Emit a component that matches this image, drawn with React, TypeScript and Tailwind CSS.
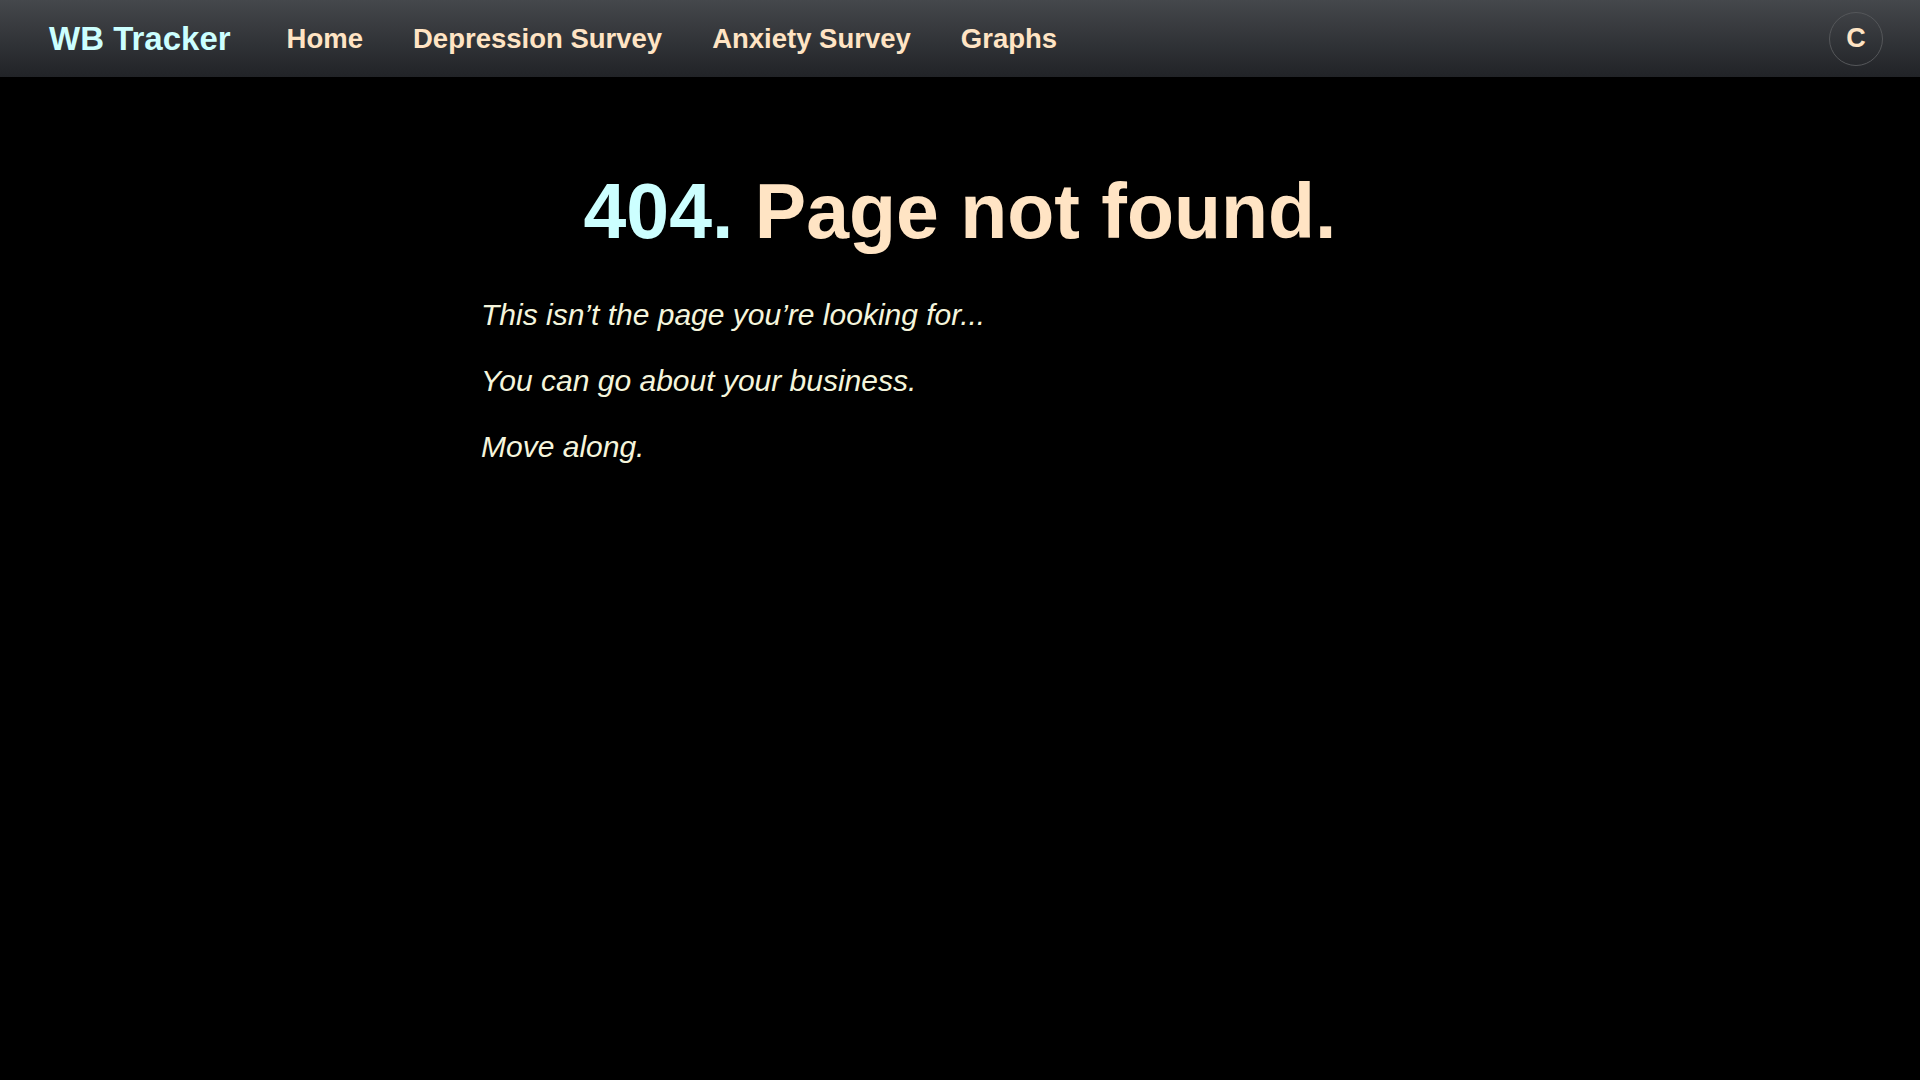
import { useState } from 'react'

const navLinks = ['Home', 'Depression Survey', 'Anxiety Survey', 'Graphs']

const lines = [
  'This isn’t the page you’re looking for...',
  'You can go about your business.',
  'Move along.',
]

export default function App() {
  const [active, setActive] = useState('')

  return (
    <div className="min-h-screen bg-black font-['Liberation_Sans',Arial,sans-serif]">
      <nav className="flex h-[77px] items-center bg-gradient-to-b from-[#45484c] to-[#212327] pl-[49px] pr-[37px]">
        <a href="#" className="mr-[56px] text-[33px] leading-none font-bold text-[#ccffff]">
          WB Tracker
        </a>
        <ul className="flex items-center gap-[50px] pt-[2px]">
          {navLinks.map((link) => (
            <li key={link}>
              <a
                href="#"
                onClick={() => setActive(link)}
                className={`text-[27.5px] leading-none font-bold ${active === link ? 'text-white' : 'text-[#ffe4c4]'}`}
              >
                {link}
              </a>
            </li>
          ))}
        </ul>
        <button
          type="button"
          className="ml-auto flex h-[54px] w-[54px] items-center justify-center rounded-full border-[1.5px] border-[#55575a] text-[27px] leading-none font-bold text-[#ffe4c4]"
        >
          C
        </button>
      </nav>

      <main className="mx-auto w-[958px] pt-[88px]">
        <h1 className="text-center text-[77px] leading-[1.2] font-bold">
          <span className="text-[#ccffff]">404.</span>{' '}
          <span className="text-[#ffe4c4]">Page not found.</span>
        </h1>
        <div className="mt-[35px] flex flex-col gap-[21px]">
          {lines.map((line) => (
            <p key={line} className="text-[30px] leading-[1.5] italic text-[#f5f5dc]">
              {line}
            </p>
          ))}
        </div>
      </main>
    </div>
  )
}
